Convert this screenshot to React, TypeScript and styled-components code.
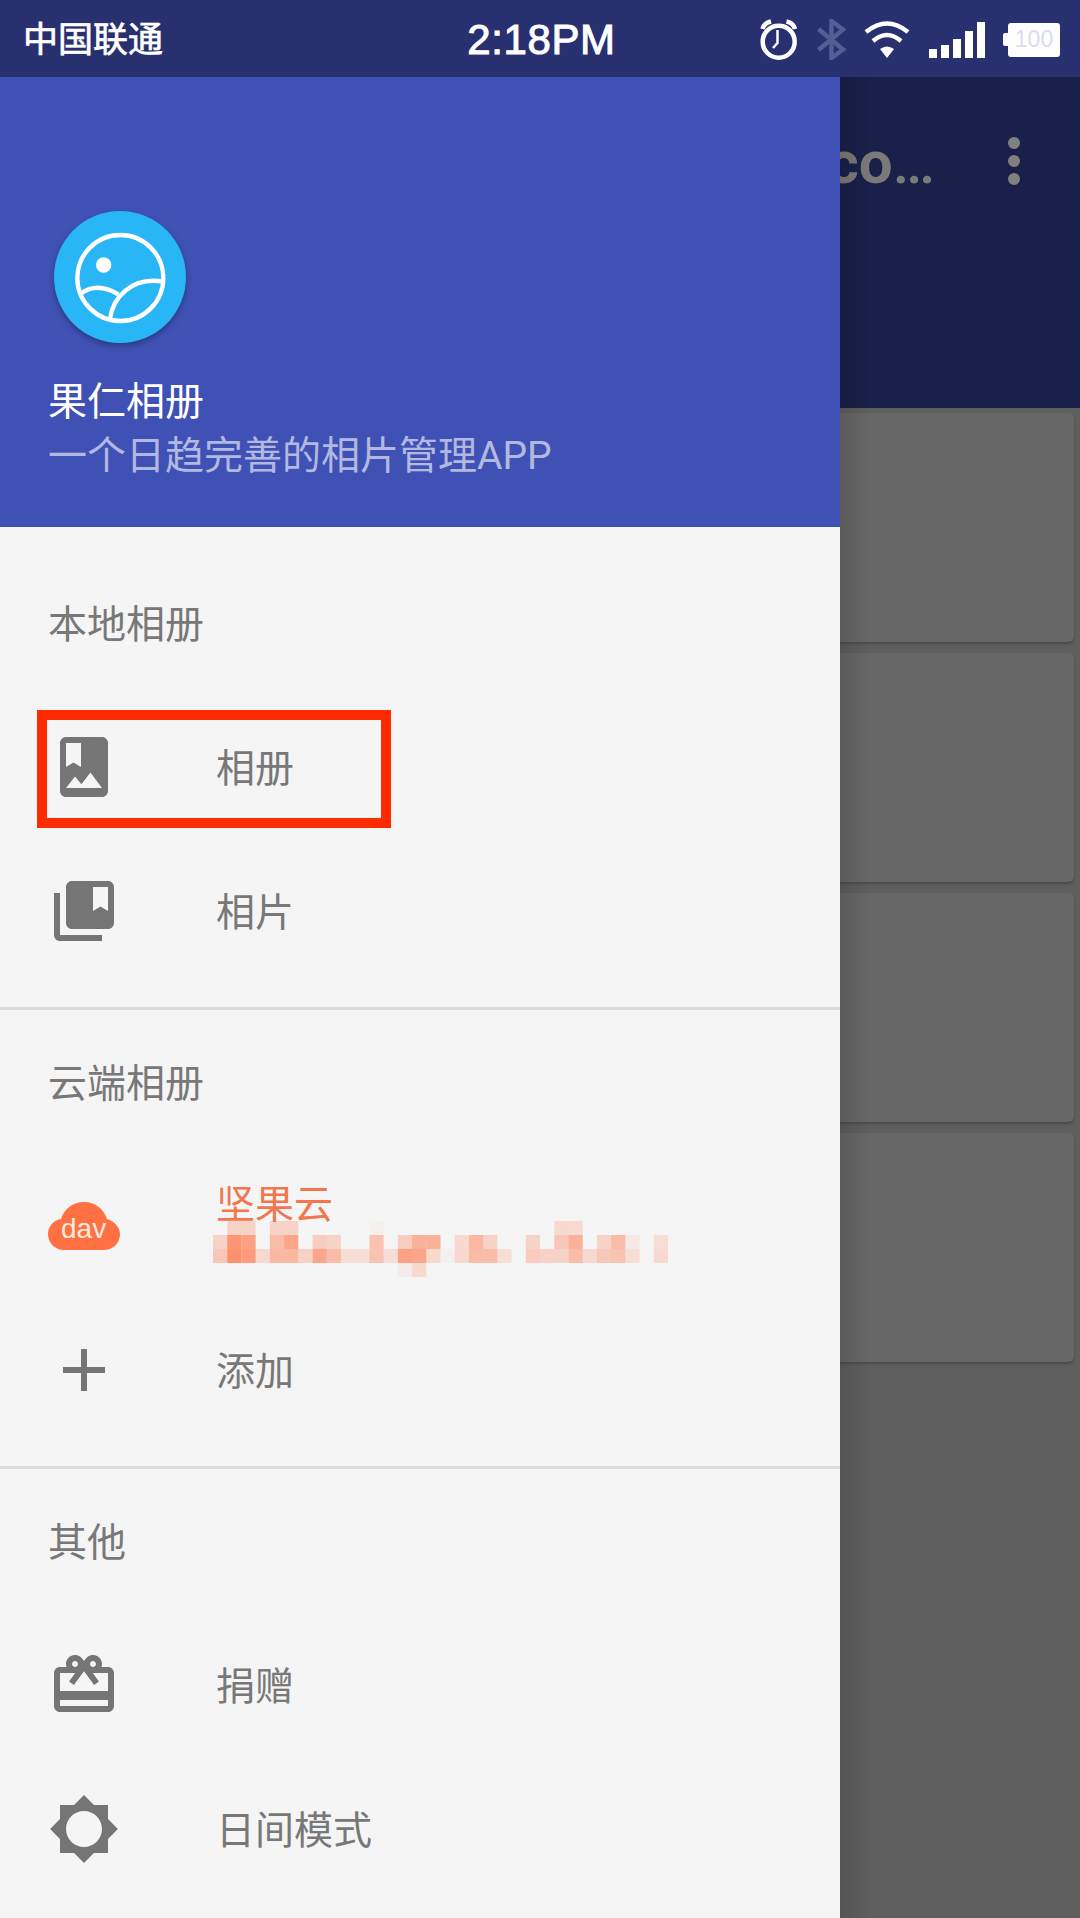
import styled, { createGlobalStyle } from "styled-components";

const GlobalStyle = createGlobalStyle`
  html, body {
    margin: 0;
    padding: 0;
    background: #5f5f5f;
  }
  * {
    box-sizing: border-box;
  }
`;

const FONT = `Roboto, "Noto Sans CJK SC", "Noto Sans", sans-serif`;

const Screen = styled.div`
  width: 1080px;
  height: 1918px;
  display: flex;
  flex-direction: column;
  overflow: hidden;
  font-family: ${FONT};
`;

/* status bar */

const StatusBar = styled.div`
  height: 77px;
  flex-shrink: 0;
  display: grid;
  grid-template-columns: 1fr auto 1fr;
  align-items: center;
  padding: 0 20px 0 23px;
  background: #29306f;
  color: #fff;
`;

const Carrier = styled.span`
  font-size: 35px;
  line-height: 77px;
  padding-top: 2px;
  -webkit-text-stroke: 0.7px #fff;
`;

const Clock = styled.span`
  font-family: "Liberation Sans", Arial, sans-serif;
  font-size: 42px;
  letter-spacing: 0.6px;
  line-height: 77px;
  -webkit-text-stroke: 1px #fff;
`;

const StatusIcons = styled.div`
  display: flex;
  align-items: center;
  justify-content: flex-end;
  gap: 18.5px;
`;

const Icon = styled.svg`
  display: block;
  flex-shrink: 0;
`;

const Battery = styled.div`
  position: relative;
  width: 52px;
  height: 34px;
  margin-left: 5px;
  display: flex;
  align-items: center;
  justify-content: center;
  border-radius: 3px;
  background: #fff;
  color: #dadded;
  font-family: "Liberation Sans", Arial, sans-serif;
  font-size: 23px;

  &::before {
    content: "";
    position: absolute;
    left: -5px;
    top: 10px;
    width: 5px;
    height: 13px;
    border-radius: 2px 0 0 2px;
    background: #fff;
  }
`;

/* main area */

const Body = styled.div`
  flex: 1;
  min-height: 0;
  display: flex;
`;

const Drawer = styled.nav`
  width: 840px;
  flex-shrink: 0;
  display: flex;
  flex-direction: column;
  background: #f5f5f5;
  color: #787878;
`;

const DrawerHeader = styled.header`
  height: 450px;
  flex-shrink: 0;
  display: flex;
  flex-direction: column;
  justify-content: flex-end;
  padding: 0 0 44px 48px;
  background: #3f51b5;
`;

const Logo = styled.div`
  width: 132px;
  height: 132px;
  margin: 0 0 32px 6px;
  border-radius: 50%;
  background: #29b6f6;
  box-shadow: 0 3px 6px rgba(0, 0, 0, 0.3);
`;

const AppName = styled.div`
  font-size: 39px;
  line-height: 54px;
  color: #fff;
`;

const AppTagline = styled.div`
  font-size: 39px;
  line-height: 54px;
  color: #b2b9e1;
`;

const Section = styled.section<{ $first?: boolean }>`
  flex-shrink: 0;
  padding: ${({ $first }) => ($first ? "24px" : "0")} 0 24px;

  &:last-child {
    padding-bottom: 0;
  }
`;

const SectionDivider = styled.hr`
  flex-shrink: 0;
  height: 3px;
  margin: 0;
  border: none;
  background: #dcdcdc;
`;

const SubHeader = styled.div`
  height: 144px;
  display: flex;
  align-items: center;
  padding: 0 0 4px 48px;
  font-size: 39px;
`;

const Row = styled.div`
  position: relative;
  height: 144px;
  display: flex;
  align-items: center;
  gap: 96px;
  padding-left: 48px;
`;

const RowLabel = styled.span`
  font-size: 39px;
  margin-bottom: 4px;
`;

const AccountText = styled.div`
  display: flex;
  flex-direction: column;
  margin-top: 3px;
`;

const AccountName = styled.span`
  font-size: 39px;
  line-height: 46px;
  margin-top: 4px;
  color: #f2774e;
`;

const AccountMask = styled.svg`
  display: block;
  width: 455px;
  height: 56px;
  margin: -7px 0 0 -3px;
`;

const Highlight = styled.div`
  position: absolute;
  left: 37px;
  top: 15px;
  width: 354px;
  height: 118px;
  border: 10px solid #ff2b00;
`;

/* the dimmed page behind the drawer */

const Backdrop = styled.div`
  position: relative;
  flex: 1;
  min-width: 0;
  display: flex;
  flex-direction: column;
  overflow: hidden;
  background: #5f5f5f;

  &::after {
    content: "";
    position: absolute;
    inset: 0 auto 0 0;
    width: 32px;
    background: linear-gradient(to right, rgba(0, 0, 0, 0.12), rgba(0, 0, 0, 0));
  }
`;

const AppBar = styled.div`
  height: 331px;
  flex-shrink: 0;
  background: #192049;
`;

const AppBarRow = styled.div`
  height: 168px;
  display: flex;
  align-items: center;
  justify-content: flex-end;
  gap: 73px;
  padding-right: 60px;
`;

const PageTitle = styled.span`
  font-family: Roboto, "Liberation Sans", sans-serif;
  font-size: 60px;
  font-weight: 700;
  line-height: 1;
  margin-top: 4px;
  white-space: nowrap;
  color: #7a7a7a;
`;

const TitleEllipsis = styled.span`
  font-weight: 500;
`;

const CardList = styled.div`
  display: flex;
  flex-direction: column;
  gap: 11px;
  margin: 5px 6px 0 -20px;
`;

const AlbumCard = styled.div`
  height: 229px;
  border-radius: 6px;
  background: #676767;
  box-shadow: 0 2px 3px rgba(0, 0, 0, 0.22);
`;

/* icons */

const AlarmIcon = () => (
  <Icon width="38" height="41" viewBox="0 0 38 41" fill="none" stroke="#fff">
    <circle cx="18.7" cy="22.7" r="16" strokeWidth="4.5" />
    <path d="M17.5 11V24L13 29" strokeWidth="2.500" />
    <path d="M2.500 10Q4 4 11 2.500M35 10Q33.500 4 26.500 2.500" strokeWidth="4.500" />
  </Icon>
);

const BluetoothIcon = () => (
  <Icon width="29" height="41" viewBox="0 0 29 41" fill="none" stroke="#545d94" strokeWidth="4.500">
    <path d="M1.500 10L26 30.500L14.500 39V2L26 10.500L1.500 31" />
  </Icon>
);

const WifiIcon = () => (
  <Icon width="46" height="37" viewBox="0 0 46 37">
    <path d="M2 11Q23-6 44 11M9 20Q23 8 37 20" fill="none" stroke="#fff" strokeWidth="4.500" />
    <path d="M16 28Q23 23 30 28L23 37Z" fill="#fff" />
  </Icon>
);

const SIGNAL_BARS = [9, 13, 19, 27, 36];

const SignalIcon = () => (
  <Icon width="56" height="36" viewBox="0 0 56 36" fill="#fff">
    {SIGNAL_BARS.map((h, i) => (
      <rect key={h} x={i * 12} y={36 - h} width="8" height={h} />
    ))}
  </Icon>
);

const LogoMark = () => (
  <svg width="132" height="132" viewBox="0 0 396 396" fill="none" stroke="#fff" strokeWidth="13">
    <circle cx="199" cy="201" r="129" />
    <circle cx="149" cy="162" r="23" fill="#fff" stroke="none" />
    <path d="M81 247Q130 212 193 250" />
    <path d="M168 325C175 262 232 195 328 212" />
  </svg>
);

const MaterialIcon = ({ d }: { d: string }) => (
  <Icon width="72" height="72" viewBox="0 0 24 24" fill="#757575">
    <path d={d} />
  </Icon>
);

const ALBUM_PATH =
  "M18 2H6c-1.100 0-2 .9-2 2v16c0 1.100.9 2 2 2h12c1.100 0 2-.9 2-2V4c0-1.100-.9-2-2-2zM6 4h5v8l-2.500-1.500L6 12V4zm0 15l3-3.860 2.140 2.580 3-3.860L18 19H6z";
const PHOTOS_PATH =
  "M4 6H2v14c0 1.100.9 2 2 2h14v-2H4V6zm16-4H8c-1.100 0-2 .9-2 2v12c0 1.100.9 2 2 2h12c1.100 0 2-.9 2-2V4c0-1.100-.9-2-2-2zm0 10l-2.500-1.500L15 12V4h5v8z";
const ADD_PATH = "M19 13h-6v6h-2v-6H5v-2h6V5h2v6h6v2z";
const GIFT_PATH =
  "M20 6h-2.180c.11-.31.18-.65.18-1 0-1.660-1.340-3-3-3-1.050 0-1.960.54-2.500 1.350l-.5.67-.5-.68C10.960 2.540 10.050 2 9 2 7.340 2 6 3.340 6 5c0 .35.07.69.18 1H4c-1.110 0-1.990.89-1.990 2L2 19c0 1.110.89 2 2 2h16c1.110 0 2-.89 2-2V8c0-1.110-.89-2-2-2zm-5-2c.55 0 1 .45 1 1s-.45 1-1 1-1-.45-1-1 .45-1 1-1zM9 4c.55 0 1 .45 1 1s-.45 1-1 1-1-.45-1-1 .45-1 1-1zm11 15H4v-2h16v2zm0-5H4V8h5.080L7 10.830 8.620 12 11 8.760l1-1.360 1 1.360L15.380 12 17 10.830 14.920 8H20v6z";
const SUN_PATH =
  "M20 15.310L23.310 12 20 8.690V4h-4.690L12 .69 8.690 4H4v4.690L.69 12 4 15.310V20h4.690L12 23.310 15.310 20H20v-4.690zM12 18c-3.310 0-6-2.690-6-6s2.690-6 6-6 6 2.690 6 6-2.690 6-6 6z";

const CloudIcon = () => (
  <Icon width="72" height="48" viewBox="0 0 72 48">
    <path
      d="M16 48C7 48 0 41 0 32C0 24 6 18 13 17C16 7 25 0 36 0C47 0 56 7 59 17C66 19 72 25 72 32C72 41 65 48 56 48Z"
      fill="#ff7043"
    />
    <text x="13" y="36" fontFamily="Liberation Sans, sans-serif" fontSize="28" fill="#ffe9df">
      dav
    </text>
  </Icon>
);

// the account name is pixelated in the screenshot, one list per row of cells
const MASK_CELLS = [
  [0, 0.3, 0.3, 0, 0.3, 0.3, 0, 0, 0, 0, 0, 0.05, 0, 0, 0, 0, 0, 0, 0, 0, 0, 0, 0, 0, 0.25, 0.25],
  [0.3, 0.85, 0.75, 0, 0.5, 0.7, 0, 0.35, 0.3, 0, 0, 0.45, 0, 0.35, 0.6, 0.6, 0, 0.25, 0.55, 0.3, 0, 0, 0.3, 0, 0.4, 0.6, 0, 0.3, 0.5, 0.1, 0, 0.2],
  [0.4, 0.9, 0.8, 0.25, 0.55, 0.55, 0.3, 0.7, 0.5, 0.2, 0.2, 0.45, 0.2, 0.75, 0.7, 0.25, 0.05, 0.25, 0.5, 0.5, 0.2, 0, 0.35, 0.3, 0.3, 0.5, 0.25, 0.4, 0.45, 0.2, 0, 0.25],
  [0, 0, 0, 0, 0, 0, 0, 0, 0, 0, 0, 0, 0, 0.08, 0.25],
];

const MaskedAccount = () => (
  <AccountMask viewBox="0 0 32 4" preserveAspectRatio="none">
    {MASK_CELLS.map((row, y) =>
      row.map((opacity, x) => (
        <rect key={`${x}-${y}`} x={x} y={y} width="1" height="1" fill="#ff7043" opacity={opacity * 0.85} />
      ))
    )}
  </AccountMask>
);

const App = () => (
  <Screen>
    <GlobalStyle />
    <StatusBar>
      <Carrier>中国联通</Carrier>
      <Clock>2:18PM</Clock>
      <StatusIcons>
        <AlarmIcon />
        <BluetoothIcon />
        <WifiIcon />
        <SignalIcon />
        <Battery>100</Battery>
      </StatusIcons>
    </StatusBar>

    <Body>
      <Drawer>
        <DrawerHeader>
          <Logo>
            <LogoMark />
          </Logo>
          <AppName>果仁相册</AppName>
          <AppTagline>一个日趋完善的相片管理APP</AppTagline>
        </DrawerHeader>

        <Section $first>
          <SubHeader>本地相册</SubHeader>
          <Row>
            <Highlight />
            <MaterialIcon d={ALBUM_PATH} />
            <RowLabel>相册</RowLabel>
          </Row>
          <Row>
            <MaterialIcon d={PHOTOS_PATH} />
            <RowLabel>相片</RowLabel>
          </Row>
        </Section>
        <SectionDivider />

        <Section>
          <SubHeader>云端相册</SubHeader>
          <Row>
            <CloudIcon />
            <AccountText>
              <AccountName>坚果云</AccountName>
              <MaskedAccount />
            </AccountText>
          </Row>
          <Row>
            <MaterialIcon d={ADD_PATH} />
            <RowLabel>添加</RowLabel>
          </Row>
        </Section>
        <SectionDivider />

        <Section>
          <SubHeader>其他</SubHeader>
          <Row>
            <MaterialIcon d={GIFT_PATH} />
            <RowLabel>捐赠</RowLabel>
          </Row>
          <Row>
            <MaterialIcon d={SUN_PATH} />
            <RowLabel>日间模式</RowLabel>
          </Row>
        </Section>
      </Drawer>

      <Backdrop>
        <AppBar>
          <AppBarRow>
            <PageTitle>
              co<TitleEllipsis>…</TitleEllipsis>
            </PageTitle>
            <Icon width="12" height="48" viewBox="0 0 12 48" fill="#808080">
              <circle cx="6" cy="6" r="6" />
              <circle cx="6" cy="24" r="6" />
              <circle cx="6" cy="42" r="6" />
            </Icon>
          </AppBarRow>
        </AppBar>
        <CardList>
          <AlbumCard />
          <AlbumCard />
          <AlbumCard />
          <AlbumCard />
        </CardList>
      </Backdrop>
    </Body>
  </Screen>
);

export default App;
